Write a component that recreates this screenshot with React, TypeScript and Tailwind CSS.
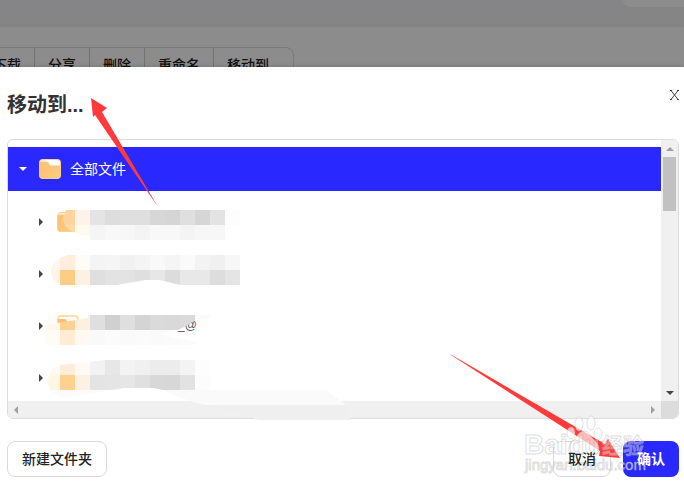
import React from "react";

const TOOLS = ["下载", "分享", "删除", "重命名", "移动到"];

type Strip = { x: number; y: number; colors: string[] };

const STRIPS: { clip: string; rows: Strip[] }[] = [
  {
    clip: "M66 210H240V225H225V240H90V236C82 235 62 232 63 217Z",
    rows: [
      { x: 60, y: 210, colors: ["#ffd59d", "#fdf3e8", "#e4e4e4", "#dddddd", "#dfdfdf", "#dfdfdf", "#d7d7d7", "#d5d5d5", "#dfdfdf", "#d6d6d6", "#e3e3e3", "#fdfdfd"] },
      { x: 60, y: 225, colors: ["#ffdba9", "#fff9ee", "#f5f5f5", "#f8f8f8", "#f7f7f7", "#f4f4f4", "#f8f8f8", "#f8f8f8", "#f4f4f4", "#f7f7f7", "#f7f7f7"] },
    ],
  },
  {
    clip: "M68 255H240V285H180L160 280H145L117 285H60C53 280 51 276 51 271C52 262 60 257 68 255Z",
    rows: [
      { x: 45, y: 255, colors: ["#fff7ee", "#ffeede", "#fffcf7", "#f4f4f4", "#f5f5f5", "#f1f1f1", "#f4f4f4", "#f9f9f9", "#f5f5f5", "#fafafa", "#f3f3f3", "#f0f0f0", "#f7f7f7"] },
      { x: 45, y: 270, colors: ["#fff3e8", "#fdcd85", "#fcf1e2", "#dfdfdf", "#e3e3e3", "#e3e3e3", "#dfdfdf", "#e7e7e7", "#dcdcdc", "#e8e8e8", "#e8e8e8", "#dddddd", "#e5e5e5"] },
    ],
  },
  {
    clip: "M45 325L88 318V315H210V319L195 320L188 325L178 330L161 334L195 342V345H45Z",
    rows: [
      { x: 45, y: 315, colors: ["#fff8ea", "#ffd294", "#fdf0e0", "#dfdfdf", "#d0d0d0", "#dfdfdf", "#d4d4d4", "#dadada", "#d9d9d9", "#dadada", "#fbfbfb"] },
      { x: 45, y: 330, colors: ["#fffcf7", "#ffecd1", "#fff9f3", "#f9f9f9", "#fbfbfb", "#fafafa", "#fbfbfb", "#fafafa", "#fbfbfb", "#fbfbfb"] },
    ],
  },
  {
    clip: "M60 365L105 360H210V390H163L153 388H124L65 398C52 395 48 388 48 382C48 373 53 367 60 365Z",
    rows: [
      { x: 45, y: 360, colors: ["#fff9f0", "#ffeddc", "#fff9f3", "#f2f2f2", "#e7e7e7", "#f3f3f3", "#f0f0f0", "#ececec", "#ececec", "#f3f3f3", "#fdfdfd"] },
      { x: 45, y: 375, colors: ["#fff7e6", "#ffd18f", "#fcf1e2", "#e4e4e4", "#e5e5e5", "#e6e6e6", "#e0e0e0", "#d8d8d8", "#d7d7d7", "#e2e2e2", "#fcfcfc"] },
      { x: 45, y: 390, colors: ["#fbfbfb", "#fbfbfb", "#fbfbfb", "#fbfbfb", "#fbfbfb", "#fbfbfb"] },
    ],
  },
];

function Folder() {
  return (
    <svg className="h-[22px] w-[22px] shrink-0" viewBox="0 0 22 22" aria-hidden="true">
      <defs>
        <linearGradient id="folderFill" x1="0" y1="0" x2="1" y2="1">
          <stop offset="0" stopColor="#ffbe72" />
          <stop offset="1" stopColor="#f9cf82" />
        </linearGradient>
        <linearGradient id="folderSheet" x1="0" y1="0" x2="1" y2="0">
          <stop offset="0" stopColor="#ffdcb4" />
          <stop offset="0.5" stopColor="#fff" />
        </linearGradient>
      </defs>
      <rect x="0" y="1" width="22" height="20" rx="4" fill="#ffd19a" />
      <path d="M3 2H18Q21 2 21 5V9H1V4Q1 2 3 2Z" fill="url(#folderSheet)" />
      <path d="M.5 5Q.5 4 2.500 4H8C10.500 4 9.500 7.500 12.500 7.500H19Q21.500 7.500 21.500 6V17Q21.500 20.500 18 20.500H4Q.5 20.500 .5 17Z" fill="url(#folderFill)" />
    </svg>
  );
}

function Triangle({ points, className }: { points: string; className: string }) {
  return (
    <svg className={`h-2 w-2 ${className}`} viewBox="0 0 8 8" aria-hidden="true">
      <polygon points={points} fill="currentColor" />
    </svg>
  );
}

function Mosaic() {
  return (
    <svg className="pointer-events-none absolute left-0 top-0 h-[490px] w-[684px]" viewBox="0 0 684 490" aria-hidden="true">
      <path d="M80 310H205V345H45V326L80 320Z" fill="#fff" />
      <path d="M58 323V319Q58 316 61 316H75Q78 316 78 319V320" fill="none" stroke="#ffdcae" strokeWidth="2" />
      <path d="M58 324V319H64Q67 319 67 322Z" fill="#ffbf70" />
      <text x="178" y="329" fontSize="12" fill="#555" fontFamily="Liberation Sans, sans-serif">_@</text>
      {STRIPS.map((group, i) => (
        <g key={i} clipPath={`url(#strip${i})`} shapeRendering="crispEdges">
          <clipPath id={`strip${i}`}>
            <path d={group.clip} />
          </clipPath>
          {group.rows.map((row) =>
            row.colors.map((color, n) => (
              <rect key={`${row.y}-${n}`} x={row.x + n * 15} y={row.y} width="15" height="15" fill={color} />
            ))
          )}
        </g>
      ))}
      <path d="M163 390H326L346 405H205Q180 399 163 390Z" fill="#fafafa" />
      <path d="M205 405H346L351 420H258L235 412Z" fill="#efefef" />
    </svg>
  );
}

function Marks() {
  return (
    <svg className="pointer-events-none absolute left-0 top-0 h-[490px] w-[684px]" viewBox="0 0 684 490" aria-hidden="true">
      <g fill="#ff3a3a">
        <path d="M91 98L107 108L102 112L158 207L95 115L93 117Z" />
        <path d="M450 354L451 355L600 451L599 456L620 458L608 439L605 444Z" />
      </g>
      <g fill="#fff" fillOpacity="0.65" stroke="#aaa" strokeOpacity="0.35" strokeWidth="1">
        <ellipse cx="579" cy="424" rx="4" ry="7" />
        <ellipse cx="591" cy="423" rx="4" ry="7" />
        <ellipse cx="571" cy="433" rx="4" ry="6" />
        <ellipse cx="598" cy="434" rx="4" ry="6" />
        <path d="M584 431C590 431 591 438 597 443C602 450 597 456 591 454Q584 452 577 454C570 456 566 450 571 443C577 438 578 431 584 431Z" />
      </g>
      <g fill="#fff" stroke="#aaa" strokeOpacity="0.4" strokeWidth="1">
        <text x="524" y="454" fontSize="28" fontWeight="700" fillOpacity="0.65" fontFamily="Liberation Sans, sans-serif">Bai</text>
        <text x="569" y="454" fontSize="25" fontWeight="700" fillOpacity="0.3" fontFamily="Liberation Sans, sans-serif">du</text>
        <text x="602" y="453" fontSize="21" fontWeight="700" fillOpacity="0.4" fontFamily="Noto Sans CJK SC, sans-serif">经验</text>
        <text x="525" y="470" fontSize="15" fillOpacity="0.65" fontFamily="Liberation Sans, sans-serif">jingyan.baidu.com</text>
      </g>
    </svg>
  );
}

export default function App() {
  return (
    <div className="relative min-h-screen overflow-hidden bg-white font-['Liberation_Sans','Noto_Sans_CJK_SC',sans-serif] text-sm text-[#222]">
      <header className="flex h-[27px] items-start justify-end bg-linear-to-b from-[#f2f2f6] to-[#f1f1f1]">
        <div className="h-[7px] w-[61px] rounded-bl-lg bg-white" />
      </header>
      <nav className="flex pt-5">
        <div className="-ml-[21px] flex h-9 rounded-lg border border-[#dcdcdc]">
          {TOOLS.map((tool, i) => (
            <button
              key={tool}
              type="button"
              className={`px-[13px] font-medium ${i < TOOLS.length - 1 ? "border-r border-[#d0d0d0]" : "pr-6"}`}
            >
              {tool}
            </button>
          ))}
        </div>
      </nav>

      <div className="absolute inset-0 flex flex-col bg-black/45 pt-[67px]">
        <section role="dialog" aria-labelledby="dialog-title" className="flex-1 bg-white pl-[7px] pr-[5px] shadow-[0_0_4px_rgba(0,0,0,0.2)]">
          <div className="flex h-[72px] items-start justify-between pt-[22px]">
            <h1 id="dialog-title" className="text-xl leading-8 font-bold text-[#333]">移动到...</h1>
            <button type="button" aria-label="关闭" className="-mr-1">
              <svg className="h-3 w-4" viewBox="0 0 16 12" fill="none" stroke="#444" aria-hidden="true">
                <path d="M4 1.500L11 10.500M11 1.500L4 10.500M3 1.500H5M10 1.500H12M3 10.500H5M10 10.500H12" />
              </svg>
            </button>
          </div>

          <div className="flex flex-col overflow-hidden rounded-md border border-[#dcdcdc]">
            <div className="flex h-[261px]">
              <ul className="flex flex-1 flex-col gap-2 overflow-hidden pt-[7px]">
                <li className="flex h-11 shrink-0 items-center bg-[#2929ff] pl-[11px] text-white">
                  <Triangle points="0,2 8,2 4,6" className="text-white" />
                  <span className="ml-3"><Folder /></span>
                  <span className="ml-[9px]">全部文件</span>
                </li>
                {[0, 1, 2, 3].map((i) => (
                  <li key={i} className="flex h-11 shrink-0 items-center pl-[31px] pt-px">
                    <Triangle points="0,0 4,4 0,8" className="text-[#444]" />
                    {i === 0 && <span className="ml-[10px]"><Folder /></span>}
                  </li>
                ))}
              </ul>
              <div className="flex w-[17px] flex-col items-center bg-[#f0f0f0] text-[#a0a0a0]">
                <span className="flex h-[17px] items-center"><Triangle points="0,6 4,2 8,6" className="text-[#a0a0a0]" /></span>
                <span className="h-[54px] w-[13px] bg-[#c1c1c1]" />
                <span className="mt-auto flex h-[17px] items-center"><Triangle points="0,2 8,2 4,6" className="text-[#444]" /></span>
              </div>
            </div>
            <div className="flex h-[17px] items-center bg-[#f0f0f0]">
              <Triangle points="6,0 2,4 6,8" className="ml-1 text-[#a0a0a0]" />
              <Triangle points="2,0 6,4 2,8" className="mr-1 ml-auto text-[#a0a0a0]" />
              <span className="h-full w-[17px] bg-[#dcdcdc]" />
            </div>
          </div>

          <footer className="flex gap-3 pt-[22px] font-medium">
            <button type="button" className="mr-auto h-9 rounded-lg border border-[#d9d9d9] px-[14px]">新建文件夹</button>
            <button type="button" className="h-9 rounded-lg border border-[#d9d9d9] px-[14px]">
              <span className="relative z-10">取消</span>
            </button>
            <button type="button" className="h-9 rounded-lg bg-[#2929ff] px-[14px] font-bold text-white">
              <span className="relative z-10">确认</span>
            </button>
          </footer>
        </section>
      </div>
      <Mosaic />
      <Marks />
    </div>
  );
}
